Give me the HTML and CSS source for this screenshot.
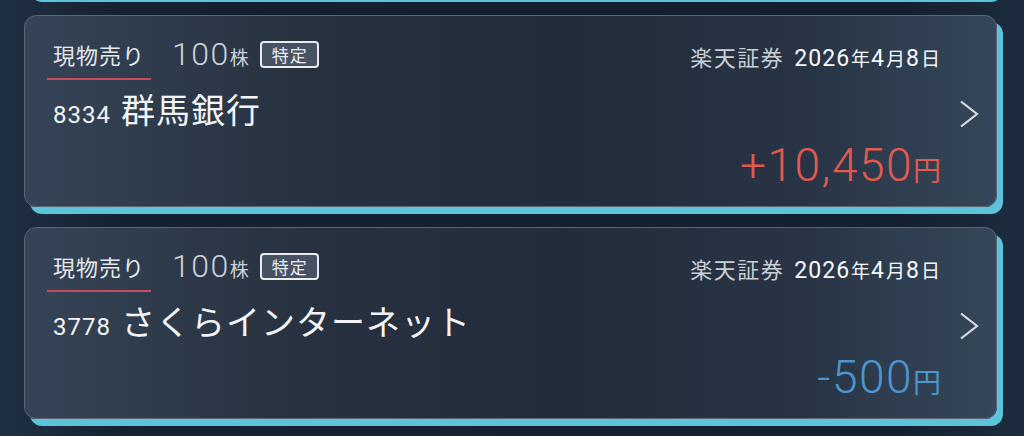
FILE: index.html
```html
<!DOCTYPE html>
<html lang="ja">
<head>
  <meta charset="utf-8">
  <meta name="viewport" content="width=device-width, initial-scale=1.0">
  <link rel="stylesheet" href="styles.css">
</head>
<body>
  <div class="list">
    <div class="card card-prev"></div>

    <div class="card">
      <div class="body">
        <div class="top">
          <div class="side">
            <span class="tab">現物売り</span>
            <span class="qty">100<small>株</small></span>
            <span class="badge">特定</span>
          </div>
          <div class="meta">
            <span class="broker">楽天証券</span>
            <span class="date">2026<small>年</small>4<small>月</small>8<small>日</small></span>
          </div>
        </div>
        <div class="name">
          <span class="code">8334</span>
          <span class="title">群馬銀行</span>
        </div>
        <div class="amount plus">+10,450<small>円</small></div>
      </div>
      <div class="chev">
        <svg width="20" height="28" viewBox="0 0 20 28"><path d="M2 1.5 L18 14 L2 26.5" fill="none" stroke="#d9dde2" stroke-width="2.2"/></svg>
      </div>
    </div>

    <div class="card">
      <div class="body">
        <div class="top">
          <div class="side">
            <span class="tab">現物売り</span>
            <span class="qty">100<small>株</small></span>
            <span class="badge">特定</span>
          </div>
          <div class="meta">
            <span class="broker">楽天証券</span>
            <span class="date">2026<small>年</small>4<small>月</small>8<small>日</small></span>
          </div>
        </div>
        <div class="name">
          <span class="code">3778</span>
          <span class="title">さくらインターネット</span>
        </div>
        <div class="amount minus">-500<small>円</small></div>
      </div>
      <div class="chev">
        <svg width="20" height="28" viewBox="0 0 20 28"><path d="M2 1.5 L18 14 L2 26.5" fill="none" stroke="#d9dde2" stroke-width="2.2"/></svg>
      </div>
    </div>
  </div>
</body>
</html>
```

FILE: styles.css
```css
html, body {
  margin: 0;
  height: 100%;
  overflow: hidden;
}

body {
  background: linear-gradient(90deg, #1f3043 0%, #152131 12%, #142030 88%, #1c2c3e 100%);
  font-family: Roboto, "Noto Sans CJK JP", sans-serif;
  color: #f2f4f6;
}

.list {
  display: flex;
  flex-direction: column;
  gap: 20px;
  padding: 0 27px 0 24px;
  margin-top: -197px;
}

.card {
  display: flex;
  height: 192px;
  box-sizing: border-box;
  border: 1px solid #5a6575;
  border-radius: 12px;
  background: linear-gradient(90deg, #354457 0%, #27313f 30%, #222c3a 55%, #283445 80%, #35475a 100%);
  box-shadow: 6px 7px 0 #5cc3d9;
}

.body {
  flex: 1;
  padding: 25px 0 0 22px;
}

.top {
  display: flex;
  justify-content: space-between;
  align-items: flex-start;
}

.side {
  display: flex;
  align-items: flex-start;
}

.tab {
  font-family: "Noto Sans CJK JP", sans-serif;
  font-size: 22px;
  letter-spacing: 1px;
  line-height: 26px;
  color: #e6e8ec;
  padding: 0 6px 11px 6px;
  border-bottom: 2px solid #c64b5c;
}

.qty {
  margin-left: 21px;
  font-size: 32px;
  font-weight: 300;
  letter-spacing: 1.5px;
  line-height: 26px;
  color: #cdd1d7;
}

.qty small {
  font-family: "Noto Sans CJK JP", sans-serif;
  font-size: 19px;
  font-weight: 400;
  letter-spacing: 0;
  margin-left: 0;
}

.badge {
  margin: 0 0 0 11px;
  height: 27px;
  box-sizing: border-box;
  padding: 0 9px 0 10px;
  border: 2px solid #e9ebee;
  border-radius: 4px;
  background: #465263;
  font-family: "Noto Sans CJK JP", sans-serif;
  font-size: 17px;
  letter-spacing: 1px;
  line-height: 23px;
  color: #e9ebee;
}

.meta {
  display: flex;
  align-items: baseline;
  line-height: 26px;
  margin-top: 2px;
}

.broker {
  font-family: "Noto Sans CJK JP", sans-serif;
  font-size: 22px;
  letter-spacing: 1.5px;
  color: #c9ced5;
  margin-right: 10px;
}

.date {
  font-size: 23px;
  letter-spacing: 1px;
  color: #f7f8fa;
}

.date small {
  font-family: "Noto Sans CJK JP", sans-serif;
  font-size: 19px;
  letter-spacing: 0;
  margin: 0 1px;
}

.name {
  display: flex;
  align-items: baseline;
  margin-top: 9px;
  line-height: 40px;
}

.code {
  font-size: 24px;
  letter-spacing: 1px;
  margin-left: 6px;
}

.title {
  font-family: "Noto Sans CJK JP", sans-serif;
  font-size: 34px;
  letter-spacing: 1px;
  margin-left: 10px;
}

.amount {
  text-align: right;
  font-size: 46px;
  font-weight: 300;
  letter-spacing: 1.5px;
  line-height: 46px;
  margin-top: 7px;
}

.amount small {
  font-family: "Noto Sans CJK JP", sans-serif;
  font-size: 28px;
  font-weight: 400;
  letter-spacing: 0;
}

.amount.plus {
  color: #e25a4f;
}

.amount.minus {
  color: #4d95cf;
}

.chev {
  width: 55px;
  display: flex;
  align-items: center;
  justify-content: center;
  margin-top: 5px;
}
```
